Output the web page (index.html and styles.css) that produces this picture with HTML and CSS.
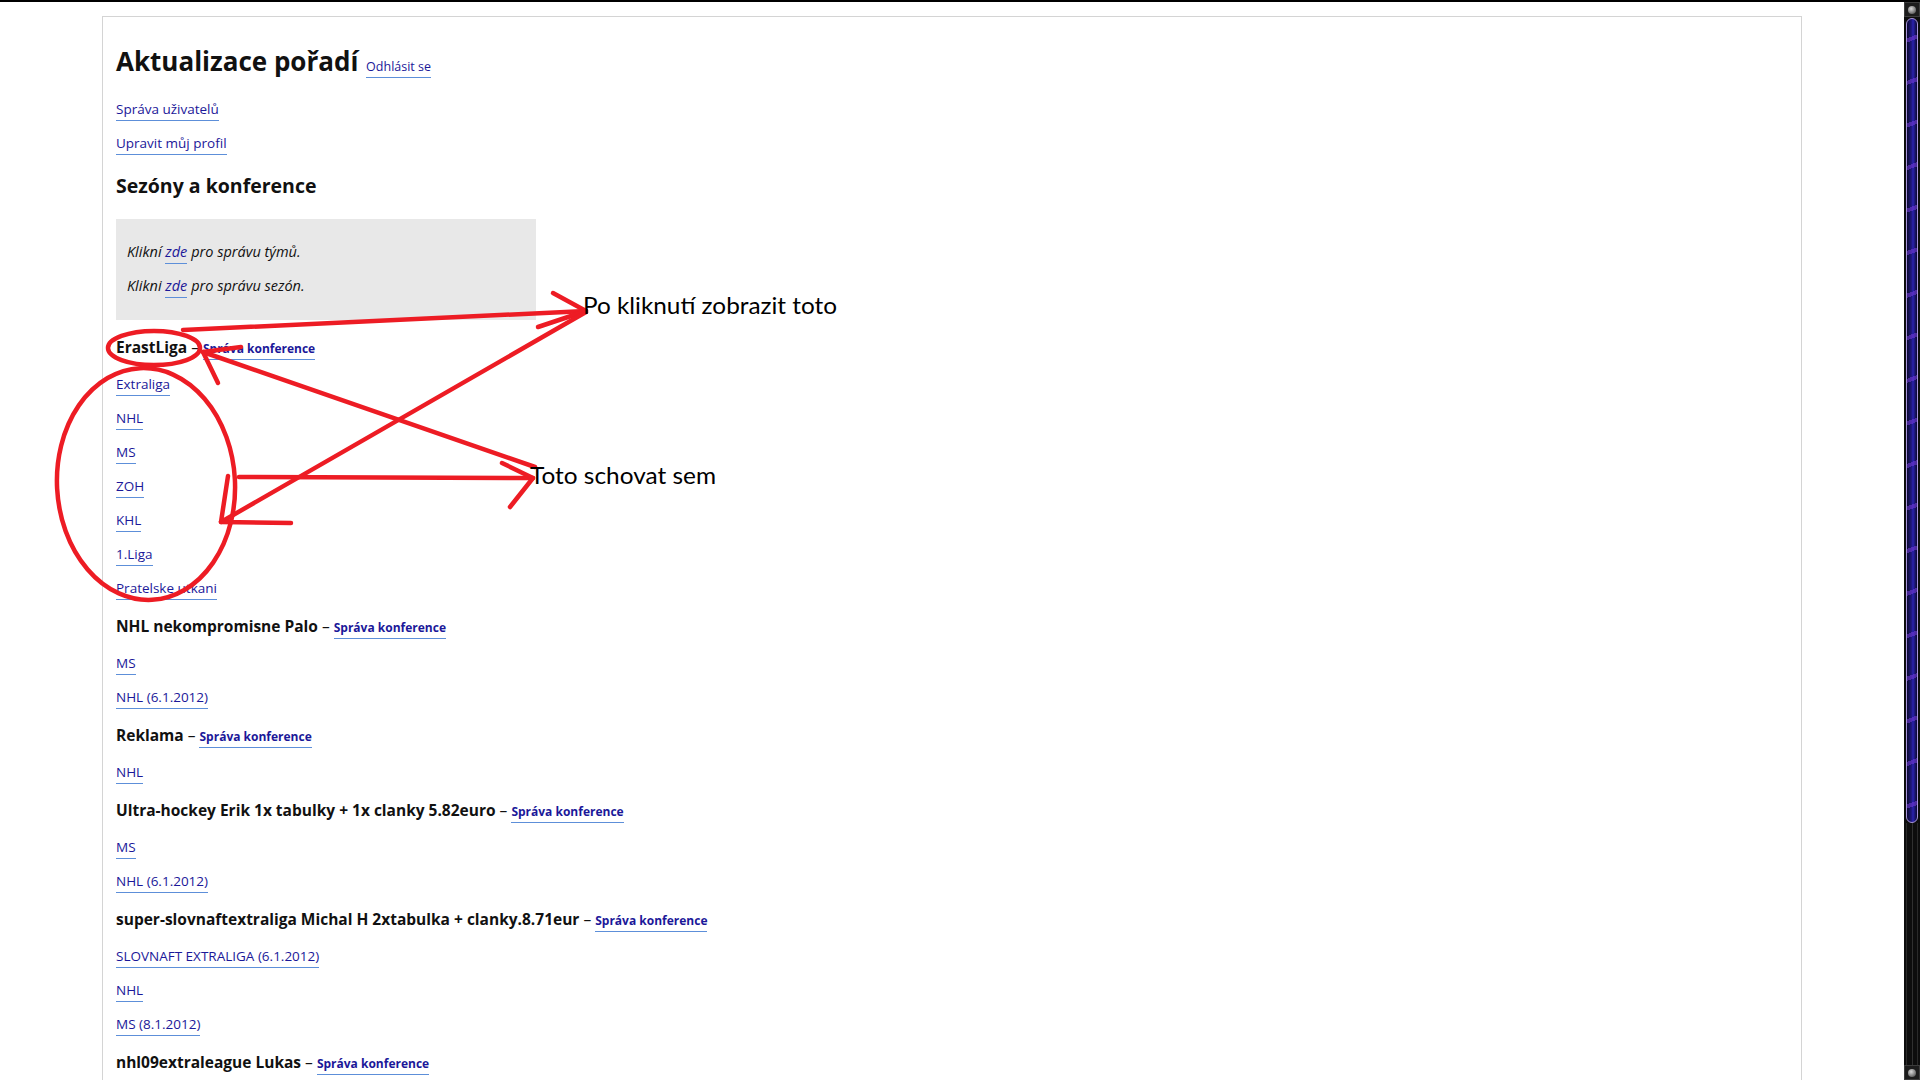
FILE: index.html
```html
<!DOCTYPE html>
<html lang="cs">
<head>
  <meta charset="UTF-8">
  <title>Aktualizace pořadí</title>
  <link rel="stylesheet" href="styles.css">
</head>
<body>
  <div class="topbar"></div>

  <div class="window">
    <div class="page">
      <div class="container">
        <h1>Aktualizace pořadí <a href="#">Odhlásit se</a></h1>

        <div class="nav">
          <p><a href="#">Správa uživatelů</a></p>
          <p><a href="#">Upravit můj profil</a></p>
        </div>

        <h2>Sezóny a konference</h2>

        <div class="notice">
          <p>Klikní <a href="#">zde</a> pro správu týmů.</p>
          <p>Klikni <a href="#">zde</a> pro správu sezón.</p>
        </div>

        <div class="conf">
          <h3>ErastLiga <span class="dash">–</span> <a href="#">Správa konference</a></h3>
          <p><a href="#">Extraliga</a></p>
          <p><a href="#">NHL</a></p>
          <p><a href="#">MS</a></p>
          <p><a href="#">ZOH</a></p>
          <p><a href="#">KHL</a></p>
          <p><a href="#">1.Liga</a></p>
          <p><a href="#">Pratelske utkani</a></p>
        </div>

        <div class="conf">
          <h3>NHL nekompromisne Palo <span class="dash">–</span> <a href="#">Správa konference</a></h3>
          <p><a href="#">MS</a></p>
          <p><a href="#">NHL (6.1.2012)</a></p>
        </div>

        <div class="conf">
          <h3>Reklama <span class="dash">–</span> <a href="#">Správa konference</a></h3>
          <p><a href="#">NHL</a></p>
        </div>

        <div class="conf">
          <h3>Ultra-hockey Erik 1x tabulky + 1x clanky 5.82euro <span class="dash">–</span> <a href="#">Správa konference</a></h3>
          <p><a href="#">MS</a></p>
          <p><a href="#">NHL (6.1.2012)</a></p>
        </div>

        <div class="conf">
          <h3>super-slovnaftextraliga Michal H 2xtabulka + clanky.8.71eur <span class="dash">–</span> <a href="#">Správa konference</a></h3>
          <p><a href="#">SLOVNAFT EXTRALIGA (6.1.2012)</a></p>
          <p><a href="#">NHL</a></p>
          <p><a href="#">MS (8.1.2012)</a></p>
        </div>

        <div class="conf">
          <h3>nhl09extraleague Lukas <span class="dash">–</span> <a href="#">Správa konference</a></h3>
        </div>
      </div>
    </div>

    <!-- scrollbar of the old browser theme -->
    <div class="scrollbar">
      <div class="sb-btn"><span class="sb-ball"></span></div>
      <div class="sb-thumb"></div>
      <div class="sb-track"></div>
      <div class="sb-btn"><span class="sb-ball"></span></div>
    </div>
  </div>

  <!-- hand drawn notes over the page -->
  <svg class="notes" width="1920" height="1080" viewBox="0 0 1920 1080">
    <g fill="none" stroke="#ed1c24" stroke-width="4.5" stroke-linecap="round" stroke-linejoin="round">
      <ellipse cx="154" cy="348" rx="46" ry="17"/>
      <ellipse cx="146" cy="484" rx="89" ry="116" transform="rotate(-3 146 484)"/>

      <path d="M183 330 L586 311"/>
      <path d="M553 293 L586 311 L538 327"/>

      <path d="M586 312 L221 522"/>
      <path d="M291 523 L221 522 L228 476"/>

      <path d="M203 352 L535 467"/>
      <path d="M241 347 L203 352 L218 383"/>

      <path d="M239 477 L533 478"/>
      <path d="M502 463 L533 478 L510 507"/>
    </g>
    <g class="note-text">
      <text x="583" y="314" textLength="254" lengthAdjust="spacingAndGlyphs">Po kliknutí zobrazit toto</text>
      <text x="530" y="484" textLength="186" lengthAdjust="spacingAndGlyphs">Toto schovat sem</text>
    </g>
  </svg>
</body>
</html>
```

FILE: styles.css
```css
/* Page frame */
body {
  margin: 0;
  height: 1080px;
  overflow: hidden;
  position: relative;
  display: flex;
  flex-direction: column;
  background: #fff;
  font-family: "Open Sans", "DejaVu Sans", sans-serif;
  color: #111;
}
.topbar {
  height: 2px;
  background: #000;
}
.window {
  flex: 1;
  display: flex;
  min-height: 0;
}
.page {
  flex: 1;
  overflow: hidden;
  padding-top: 14px;
}

/* White content sheet */
.container {
  width: 1700px;
  min-height: 1100px;
  box-sizing: border-box;
  margin: 0 auto;
  padding: 0 13px;
  border: 1px solid #d4d4d4;
  border-bottom: 0;
}

a {
  color: #1b1899;
  text-decoration: none;
  border-bottom: 1px solid #5d8fd9;
  padding-bottom: 2px;
}
p {
  margin: 0;
  font-size: 13.5px;
  line-height: 34px;
}

h1 {
  margin: 29px 0 0;
  font-size: 26px;
  line-height: 30px;
  font-weight: bold;
}
h1 a {
  font-size: 12.5px;
  font-weight: normal;
  margin-left: 1px;
}

.nav {
  margin-top: 10px;
}

h2 {
  margin: 13px 0 20px;
  font-size: 19.5px;
  line-height: 26px;
  font-weight: bold;
}

/* grey info box */
.notice {
  width: 420px;
  box-sizing: border-box;
  padding: 16px 11px 17px;
  margin-bottom: 6px;
  background: #e8e8e8;
  font-style: italic;
}
.notice p {
  font-size: 14.5px;
}

/* conferences */
.conf h3 {
  margin: 0;
  padding-top: 2.5px;
  font-size: 15.5px;
  line-height: 37.5px;
  font-weight: bold;
}
.conf h3 a {
  font-size: 12px;
}
.dash {
  font-weight: normal;
}

/* scrollbar */
.scrollbar {
  width: 16px;
  display: flex;
  flex-direction: column;
  background: #0d0d0d;
}
.sb-btn {
  height: 15px;
  box-sizing: border-box;
  border: 1px solid #3c3c3c;
  background: #1c1c1c;
  display: flex;
  align-items: center;
  justify-content: center;
}
.sb-ball {
  width: 8px;
  height: 8px;
  border-radius: 50%;
  background: radial-gradient(circle at 40% 35%, #d8d8d8, #7a7a7a 60%, #3a3a3a);
}
.sb-thumb {
  height: 805px;
  margin: 1px 2px 0;
  box-sizing: border-box;
  border: 1px solid #a895dc;
  border-radius: 6px;
  background:
    repeating-linear-gradient(160deg, transparent 0 18px, rgba(120, 60, 220, 0.55) 18px 22px, transparent 22px 40px),
    linear-gradient(90deg, #0a0830, #1f1880 45%, #2b22b0 60%, #0a0830);
}
.sb-track {
  flex: 1;
  margin: 0 2px;
  border-left: 1px solid #2a2a2a;
  border-right: 1px solid #2a2a2a;
  background: linear-gradient(90deg, #0d0d0d 45%, #303030 45% 55%, #0d0d0d 55%);
}

/* annotations */
.notes {
  position: absolute;
  top: 0;
  left: 0;
  pointer-events: none;
}
.note-text {
  font-family: Lato, "Open Sans", sans-serif;
  font-size: 24px;
  fill: #000;
}
```
